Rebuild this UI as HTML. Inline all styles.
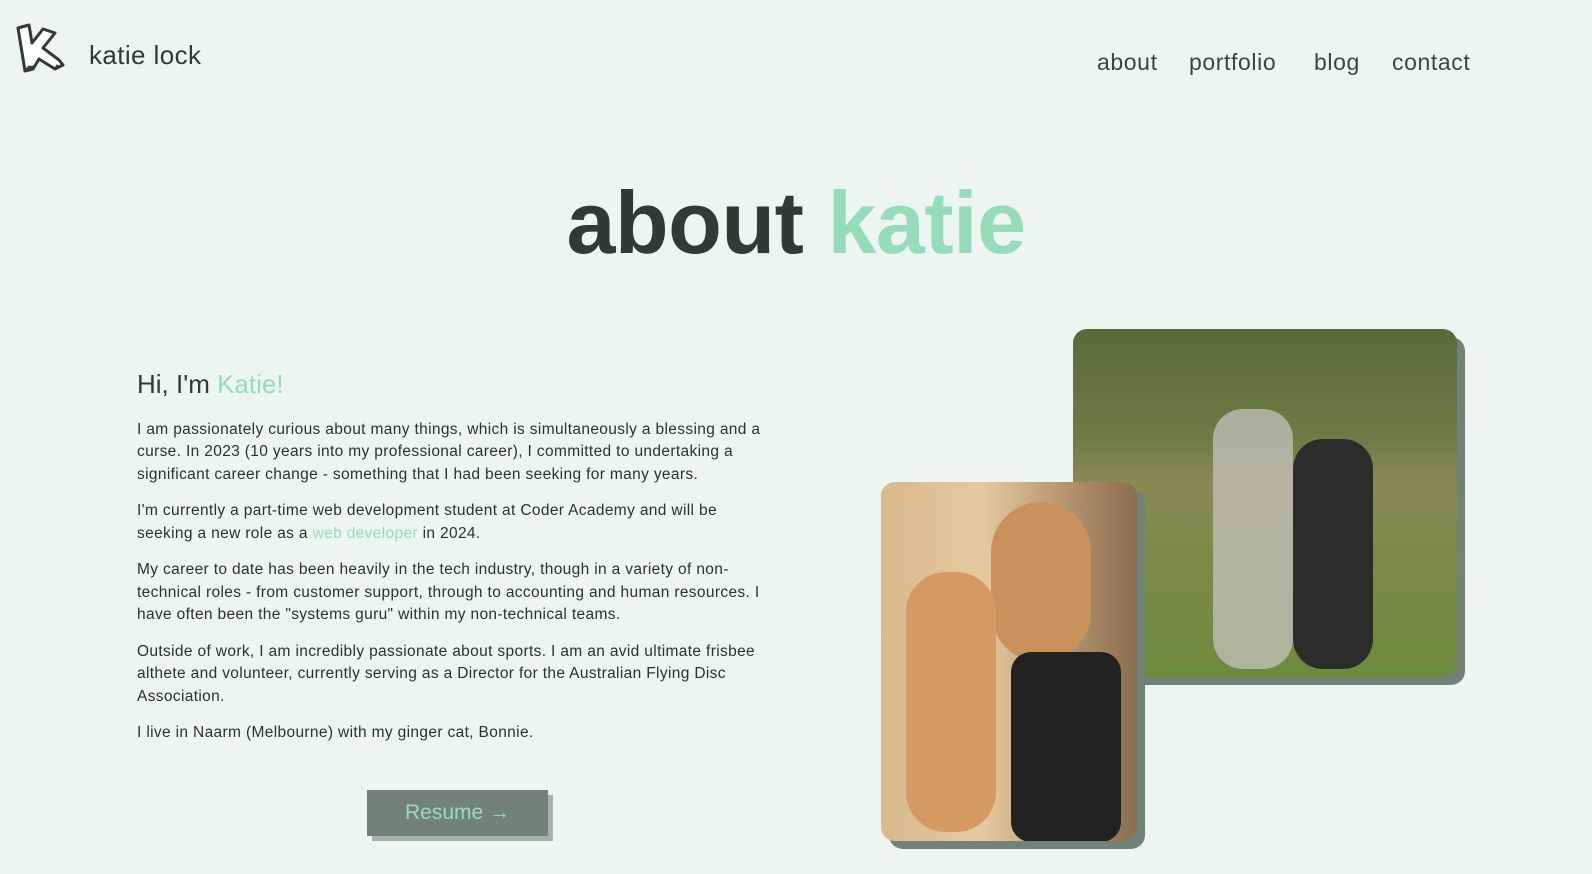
<!DOCTYPE html>
<html><head><meta charset="utf-8"><style>
*{margin:0;padding:0;box-sizing:border-box}
body{width:1592px;height:874px;background:#edf5f0;font-family:"Liberation Sans",sans-serif;color:#2f3b33;position:relative;overflow:hidden}
.abs{position:absolute}
.nav a{position:absolute;top:49px;font-size:23px;color:#3a4740;text-decoration:none;letter-spacing:0.6px}
p{font-size:15.5px;line-height:22.4px;margin-bottom:14.2px;color:#2a332d;white-space:nowrap;letter-spacing:0.35px}
.g{color:#96dcb9}
</style></head><body>
<svg class="abs" style="left:15px;top:23px" width="52" height="50" viewBox="0 0 52 50">
<path d="M3 5 L14 2 L17 20 L28 6 L40 10 L28 25 L44 37 L48 42 L40 46 L24 36 L18 46 L10 48 Z" fill="#fff" stroke="#2f3b33" stroke-width="3" stroke-linejoin="round"/>
<path d="M10 48 L14 44 L20 44 M40 46 L43 42" stroke="#2f3b33" stroke-width="2.5" fill="none"/>
</svg>
<div class="abs" style="left:89px;top:40px;font-size:26px;color:#2f3b33;letter-spacing:0.4px">katie lock</div>
<div class="nav"><a style="left:1097px">about</a><a style="left:1189px">portfolio</a><a style="left:1314px">blog</a><a style="left:1392px">contact</a></div>
<div class="abs" style="left:0;width:1592px;text-align:center;top:172px;font-size:88px;font-weight:bold;color:#2f3b33;letter-spacing:-0.5px">about <span class="g">katie</span></div>
<div class="abs" style="left:137px;top:369px;font-size:26px;color:#2f3b33">Hi, I'm <span class="g">Katie!</span></div>
<div class="abs" style="left:137px;top:419px">
<p>I am passionately curious about many things, which is simultaneously a blessing and a<br>curse. In 2023 (10 years into my professional career), I committed to undertaking a<br>significant career change - something that I had been seeking for many years.</p>
<p>I'm currently a part-time web development student at Coder Academy and will be<br>seeking a new role as a <span class="g">web developer</span> in 2024.</p>
<p>My career to date has been heavily in the tech industry, though in a variety of non-<br>technical roles - from customer support, through to accounting and human resources. I<br>have often been the "systems guru" within my non-technical teams.</p>
<p>Outside of work, I am incredibly passionate about sports. I am an avid ultimate frisbee<br>althete and volunteer, currently serving as a Director for the Australian Flying Disc<br>Association.</p>
<p>I live in Naarm (Melbourne) with my ginger cat, Bonnie.</p>
</div>
<div class="abs" style="left:372px;top:795px;width:181px;height:46px;background:#a5b5ab"></div>
<div class="abs" style="left:367px;top:790px;width:181px;height:46px;background:#728278;color:#96dcb9;font-size:21px;text-align:center;line-height:46px">Resume →</div>
<div class="abs" style="left:1081px;top:337px;width:384px;height:348px;background:#718279;border-radius:14px"></div>
<div class="abs" style="left:1073px;top:329px;width:384px;height:348px;border-radius:14px;overflow:hidden;background:linear-gradient(180deg,#5a6a3a 0%,#6c7a45 30%,#8a8a55 45%,#7e8a4a 60%,#6d8a3c 100%)">
<div class="abs" style="left:140px;top:80px;width:80px;height:260px;background:#c9c6c4;border-radius:30px;opacity:.7"></div>
<div class="abs" style="left:220px;top:110px;width:80px;height:230px;background:#2a2d2a;border-radius:30px"></div>
</div>
<div class="abs" style="left:889px;top:490px;width:256px;height:359px;background:#718279;border-radius:14px"></div>
<div class="abs" style="left:881px;top:482px;width:256px;height:359px;border-radius:14px;overflow:hidden;background:linear-gradient(90deg,#d9b98d 0%,#e6c9a0 40%,#b89770 70%,#8a6d50 100%)">
<div class="abs" style="left:110px;top:20px;width:100px;height:160px;background:#c9925c;border-radius:50px"></div>
<div class="abs" style="left:130px;top:170px;width:110px;height:190px;background:#222;border-radius:20px"></div>
<div class="abs" style="left:25px;top:90px;width:90px;height:260px;background:#d59a62;border-radius:40px"></div>
</div>
</body></html>
